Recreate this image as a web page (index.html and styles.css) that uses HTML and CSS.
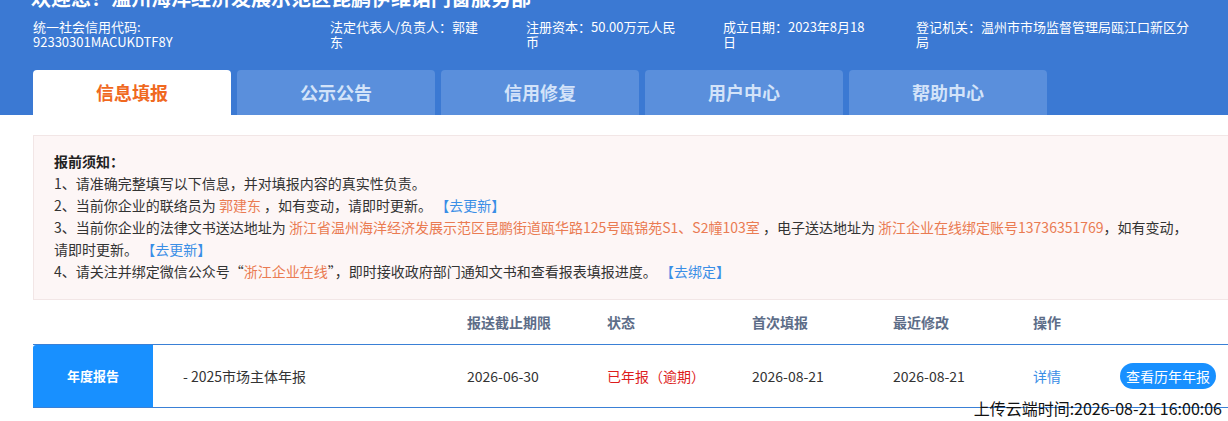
FILE: index.html
```html
<!DOCTYPE html>
<html>
	<head>
		<meta charset="utf-8">
		<title>信息填报</title>
		<link rel="stylesheet" href="styles.css">
	</head>
	<body>
		<div class="header">
			<div class="wrap">
				<div class="title">欢迎您！温州海洋经济发展示范区昆鹏伊维诺门窗服务部</div>
				<div class="info">
					<div class="infocol"><span class="infotext w1">统一社会信用代码:<wbr>92330301MACUKDTF8Y</span></div>
					<div class="infocol"><span class="infotext w2">法定代表人/负责人：郭建东</span></div>
					<div class="infocol"><span class="infotext w3">注册资本：50.00万元人民币</span></div>
					<div class="infocol"><span class="infotext w4">成立日期：2023年8月18日</span></div>
					<div class="infocol"><span class="infotext w5">登记机关：温州市市场监督管理局瓯江口新区分局</span></div>
				</div>
				<div class="tabs">
					<div class="tab active">信息填报</div>
					<div class="tab">公示公告</div>
					<div class="tab">信用修复</div>
					<div class="tab">用户中心</div>
					<div class="tab">帮助中心</div>
				</div>
			</div>
		</div>

		<div class="wrap">
			<div class="notice">
				<div class="line bold">报前须知：</div>
				<div class="line">1、请准确完整填写以下信息，并对填报内容的真实性负责。</div>
				<div class="line">2、当前你企业的联络员为 <span class="hl">郭建东</span> ，如有变动，请即时更新。 <a class="lnk">【去更新】</a></div>
				<div class="line">3、当前你企业的法律文书送达地址为 <span class="hl">浙江省温州海洋经济发展示范区昆鹏街道瓯华路125号瓯锦苑S1、S2幢103室</span> ，电子送达地址为 <span class="hl">浙江企业在线绑定账号13736351769</span>，如有变动，</div>
				<div class="line">请即时更新。 <a class="lnk">【去更新】</a></div>
				<div class="line">4、请关注并绑定微信公众号“<span class="hl">浙江企业在线</span>”，即时接收政府部门通知文书和查看报表填报进度。 <a class="lnk">【去绑定】</a></div>
			</div>

			<div class="thead">
				<div></div>
				<div></div>
				<div>报送截止期限</div>
				<div>状态</div>
				<div>首次填报</div>
				<div>最近修改</div>
				<div>操作</div>
				<div></div>
			</div>
			<div class="rowbox">
				<div class="trow">
					<div class="kind">年度报告</div>
					<div class="name">- 2025市场主体年报</div>
					<div>2026-06-30</div>
					<div class="late">已年报（逾期）</div>
					<div>2026-08-21</div>
					<div>2026-08-21</div>
					<div><a class="lnk">详情</a></div>
					<div><span class="histbtn">查看历年年报</span></div>
				</div>
				<div class="uptime">上传云端时间:2026-08-21 16:00:06</div>
			</div>
		</div>
	</body>
</html>
```

FILE: styles.css
```css
html {
	overflow: hidden;
}
body {
	margin: 0; padding: 0; background: #fff; min-height: 421px;
	font-family: "Noto Sans CJK SC", "Noto Sans", sans-serif; font-size: 13px; color: #333;
}
.wrap {
	width: 1200px; margin-left: 33px;
}
.header {
	background: #3b79d3; height: 115px; width: 1260px; display: flow-root;
}
.title {
	color: #fff; font-size: 20px; font-weight: bold; line-height: 26px; margin-top: -15px; margin-left: -2px;
}
.info {
	display: grid; grid-template-columns: 297px 196px 197px 193px 300px; margin-top: 8px; height: 37px;
}
.infotext {
	display: block; color: #fff; font-size: 13px; line-height: 15px;
}
.w1 { width: 150px; }
.w2 { width: 150px; }
.w3 { width: 155px; }
.w4 { width: 150px; }
.w5 { width: 280px; }
.tabs {
	display: flex; gap: 6px; margin-top: 14px;
}
.tab {
	width: 198px; height: 45px; line-height: 45px; text-align: center; border-radius: 4px 4px 0 0;
	background: #5a8fdc; color: #d3e3f9; font-size: 18px; font-weight: bold;
}
.tab.active {
	background: #fff; color: #f0691f;
}
.notice {
	margin-top: 20px; background: #fdf6f6; border: 1px solid #f2e6e6; padding: 14px 20px 15px 20px; height: 134px;
	font-size: 14px;
}
.line {
	line-height: 22px; white-space: nowrap; color: #333;
}
.bold {
	font-weight: bold; color: #222;
}
.hl {
	color: #ea7b52;
}
.lnk {
	color: #3a8ee6; cursor: pointer;
}
.thead, .trow {
	display: grid; grid-template-columns: 120px 314px 140px 145px 141px 140px 87px 1fr; align-items: center;
}
.thead {
	height: 44px; color: #5d6d88; font-weight: bold; font-size: 14px;
}
.rowbox {
	position: relative;
}
.trow {
	height: 62px; border-top: 1px solid #3a80d6; border-bottom: 1px solid #3a80d6; font-size: 14px; color: #333;
}
.kind {
	background: #1890ff; color: #fff; font-weight: bold; height: 62px; line-height: 62px; text-align: center; font-size: 13px; border-radius: 3px 0 0 0;
}
.name {
	padding-left: 30px;
}
.late {
	color: #dd1c1c;
}
.histbtn {
	display: inline-block; background: #1890ff; color: #fff; font-size: 14px; height: 26px; line-height: 26px; padding: 0 6px; border-radius: 13px;
}
.uptime {
	position: absolute; right: 11px; top: 54px; font-size: 16px; color: #111; line-height: 20px;
}
```
